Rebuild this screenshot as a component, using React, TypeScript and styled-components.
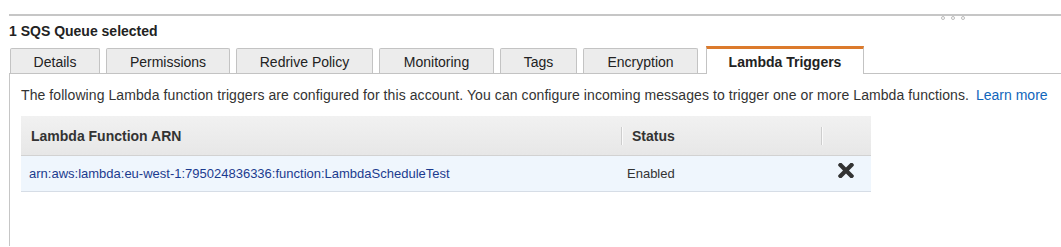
import styled, { createGlobalStyle } from "styled-components";

const GlobalStyle = createGlobalStyle`
  body {
    margin: 0;
    background: #fff;
    font-family: "Liberation Sans", Arial, Helvetica, sans-serif;
    color: #333;
  }
`;

const tabs = [
  { label: "Details", width: 90 },
  { label: "Permissions", width: 124 },
  { label: "Redrive Policy", width: 137 },
  { label: "Monitoring", width: 115 },
  { label: "Tags", width: 77 },
  { label: "Encryption", width: 115 },
  { label: "Lambda Triggers", width: 158 },
];

const triggers = [
  {
    arn: "arn:aws:lambda:eu-west-1:795024836336:function:LambdaScheduleTest",
    status: "Enabled",
  },
];

export default function App() {
  return (
    <StyledPage>
      <GlobalStyle />
      <StyledRule>
        <StyledGrip>
          <StyledGripDot />
          <StyledGripDot />
          <StyledGripDot />
        </StyledGrip>
      </StyledRule>
      <StyledTitle>1 SQS Queue selected</StyledTitle>

      <StyledTabRow>
        {tabs.map((tab) => (
          <StyledTab
            key={tab.label}
            $width={tab.width}
            $active={tab.label === "Lambda Triggers"}
          >
            {tab.label}
          </StyledTab>
        ))}
      </StyledTabRow>

      <StyledPanel>
        <StyledDescription>
          The following Lambda function triggers are configured for this
          account. You can configure incoming messages to trigger one or more
          Lambda functions. <StyledLearnMore href="#">Learn more</StyledLearnMore>
        </StyledDescription>

        <StyledTable>
          <colgroup>
            <col style={{ width: 600 }} />
            <col style={{ width: 200 }} />
            <col style={{ width: 50 }} />
          </colgroup>
          <thead>
            <tr>
              <StyledHeadCell>Lambda Function ARN</StyledHeadCell>
              <StyledHeadCell $divider>Status</StyledHeadCell>
              <StyledHeadCell $divider />
            </tr>
          </thead>
          <tbody>
            {triggers.map((t) => (
              <tr key={t.arn}>
                <StyledCell $pad={8}>
                  <StyledArnLink href="#">{t.arn}</StyledArnLink>
                </StyledCell>
                <StyledCell $pad={6}>{t.status}</StyledCell>
                <StyledCell $pad={0} $center>
                  <StyledRemove aria-label="Remove trigger">
                    <svg width="16" height="15" viewBox="0 89 352 334">
                      <path
                        fill="currentColor"
                        d="M242.72 256l100.07-100.07c12.28-12.28 12.28-32.19 0-44.48l-22.24-22.24c-12.28-12.28-32.19-12.28-44.48 0L176 189.28 75.93 89.21c-12.28-12.28-32.19-12.28-44.48 0L9.21 111.45c-12.28 12.28-12.28 32.19 0 44.48L109.28 256 9.21 356.07c-12.28 12.28-12.28 32.19 0 44.48l22.24 22.24c12.28 12.28 32.2 12.28 44.48 0L176 322.72l100.07 100.07c12.28 12.28 32.2 12.28 44.48 0l22.24-22.24c12.28-12.28 12.28-32.19 0-44.48L242.72 256z"
                      />
                    </svg>
                  </StyledRemove>
                </StyledCell>
              </tr>
            ))}
          </tbody>
        </StyledTable>
      </StyledPanel>
    </StyledPage>
  );
}

const StyledPage = styled.div`
  padding: 14px 0 0 9px;
  font-size: 14px;
`;

const StyledRule = styled.div`
  position: relative;
  height: 2px;
  background: #c6c6c6;
`;

// resize grip hanging under the divider
const StyledGrip = styled.div`
  position: absolute;
  top: 2px;
  left: 932px;
  display: flex;
  gap: 6px;
`;

const StyledGripDot = styled.span`
  box-sizing: border-box;
  width: 4px;
  height: 4px;
  border-radius: 50%;
  border: 1px solid #bdbdbd;
  background: #fff;
`;

const StyledTitle = styled.h2`
  margin: 7px 0 0;
  font-size: 14px;
  line-height: 17px;
  font-weight: bold;
  color: #222;
`;

const StyledTabRow = styled.div`
  display: flex;
  align-items: flex-end;
  gap: 6px;
  margin-top: 6px;
  padding-left: 1px;
  height: 27px;
  border-bottom: 1px solid #c3c3c3;
`;

const StyledTab = styled.div<{ $active?: boolean; $width: number }>`
  box-sizing: border-box;
  flex: none;
  width: ${(p) => p.$width}px;
  padding-top: 2px;
  line-height: 22px;
  font-size: 14px;
  text-align: center;
  white-space: nowrap;
  color: #222;
  border: 1px solid #c3c3c3;
  border-bottom: none;
  border-radius: 2px 2px 0 0;
  background: #ececec;
  height: 25px;

  ${(p) =>
    p.$active &&
    `
    height: 28px;
    margin-bottom: -1px;
    margin-left: 2px;
    border-top: 3px solid #dc7a2c;
    border-radius: 0;
    background: #fff;
    font-weight: bold;
  `}
`;

const StyledPanel = styled.div`
  border-left: 1px solid #c6c6c6;
  padding: 12px 0 0 11px;
  min-height: 160px;
`;

const StyledDescription = styled.p`
  margin: 0;
  line-height: 18px;
  font-size: 14px;
  letter-spacing: 0.08px;
  color: #333;
  white-space: nowrap;
`;

const StyledLearnMore = styled.a`
  margin-left: 3px;
  letter-spacing: 0;
  color: #1166bb;
  text-decoration: none;
`;

const StyledTable = styled.table`
  margin-top: 12px;
  width: 850px;
  border-collapse: collapse;
  table-layout: fixed;
`;

const StyledHeadCell = styled.th<{ $divider?: boolean }>`
  height: 39px;
  padding: 0 0 0 ${(p) => (p.$divider ? 11 : 10)}px;
  text-align: left;
  font-size: 14px;
  font-weight: bold;
  color: #333;
  border-bottom: 1px solid #d2d2d2;
  background: ${(p) =>
      p.$divider
        ? "linear-gradient(#cdcdcd, #cdcdcd) left center / 1px 18px no-repeat, linear-gradient(#fafafa, #fafafa) 1px center / 1px 18px no-repeat, "
        : ""}
    linear-gradient(#f1f1f1, #e7e7e7);
`;

const StyledCell = styled.td<{ $pad: number; $center?: boolean }>`
  height: 36px;
  box-sizing: border-box;
  padding: 0 0 ${(p) => (p.$center ? 7 : 0)}px ${(p) => p.$pad}px;
  font-size: 13px;
  color: #333;
  text-align: ${(p) => (p.$center ? "center" : "left")};
  background: #eff6fd;
  border-bottom: 1px solid #d6dde6;
`;

const StyledArnLink = styled.a`
  color: #1b3b8f;
  text-decoration: none;
`;

const StyledRemove = styled.button`
  display: inline-flex;
  padding: 0;
  border: none;
  background: none;
  color: #333;
  cursor: pointer;
  vertical-align: middle;
`;
